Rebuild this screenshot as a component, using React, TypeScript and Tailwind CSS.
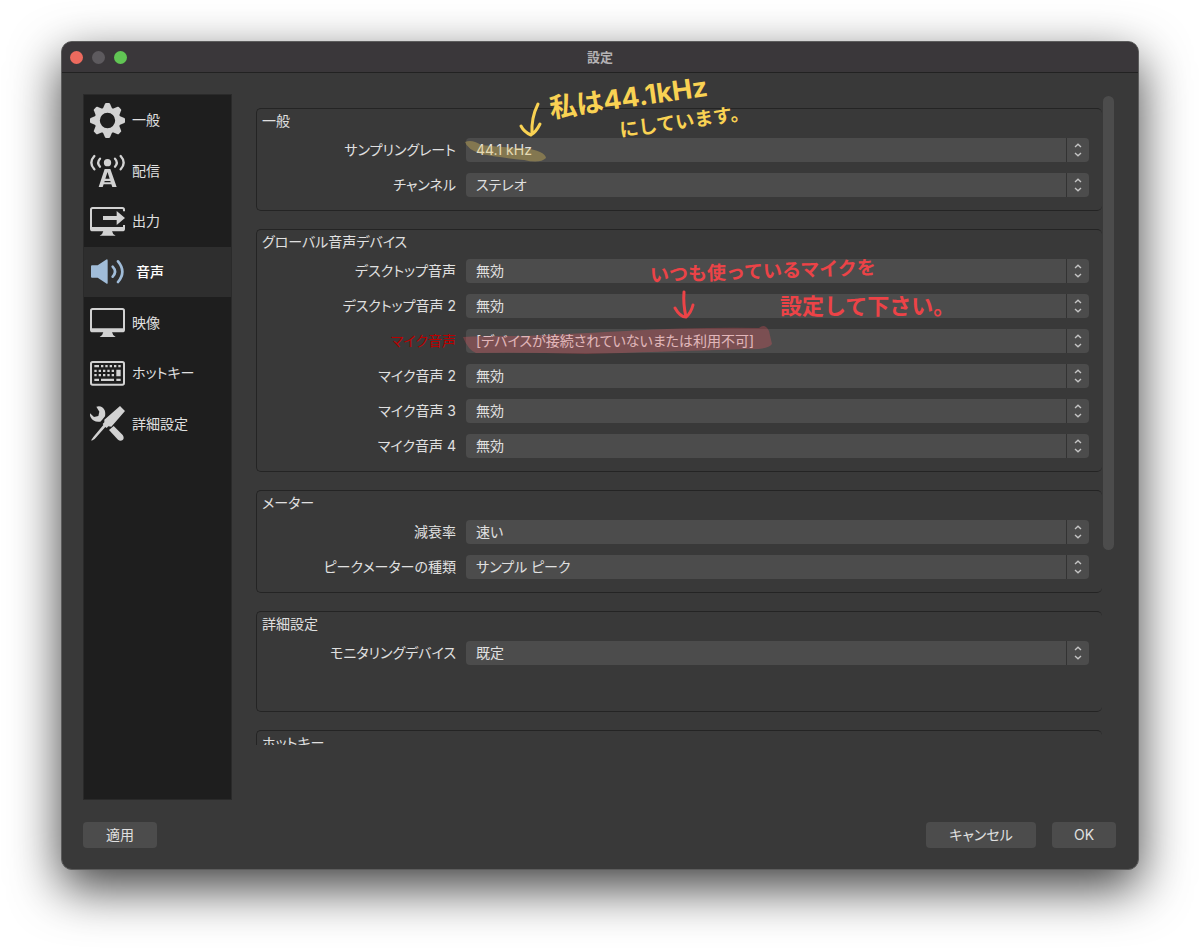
import { useState } from "react";
import type { ReactNode } from "react";

type Field = { id: string; label: string; value: string; missing?: boolean };
type Group = { title: string; fields: Field[]; tall?: boolean };

const groups: Group[] = [
  {
    title: "一般",
    fields: [
      { id: "sample-rate", label: "サンプリングレート", value: "44.1 kHz" },
      { id: "channels", label: "チャンネル", value: "ステレオ" },
    ],
  },
  {
    title: "グローバル音声デバイス",
    fields: [
      { id: "desktop-1", label: "デスクトップ音声", value: "無効" },
      { id: "desktop-2", label: "デスクトップ音声 2", value: "無効" },
      {
        id: "mic-1",
        label: "マイク音声",
        value: "[デバイスが接続されていないまたは利用不可]",
        missing: true,
      },
      { id: "mic-2", label: "マイク音声 2", value: "無効" },
      { id: "mic-3", label: "マイク音声 3", value: "無効" },
      { id: "mic-4", label: "マイク音声 4", value: "無効" },
    ],
  },
  {
    title: "メーター",
    fields: [
      { id: "decay", label: "減衰率", value: "速い" },
      { id: "peak", label: "ピークメーターの種類", value: "サンプル ピーク" },
    ],
  },
  {
    title: "詳細設定",
    fields: [{ id: "monitor", label: "モニタリングデバイス", value: "既定" }],
    tall: true,
  },
  { title: "ホットキー", fields: [], tall: true },
];

const Icon = ({ children }: { children: ReactNode }) => (
  <svg viewBox="0 0 105 105" className="size-[35px] shrink-0" fill="currentColor" aria-hidden="true">
    {children}
  </svg>
);

const teeth = [0, 45, 90, 135, 180, 225, 270, 315];

const GearIcon = () => (
  <Icon>
    <circle cx="52.5" cy="52.5" r="31" fill="none" stroke="currentColor" strokeWidth="16" />
    {teeth.map((angle) => (
      <path
        key={angle}
        d="M38 18 L45 2 Q46 0 48 0 H57 Q59 0 60 2 L67 18 Z"
        transform={`rotate(${angle} 52.5 52.5)`}
      />
    ))}
  </Icon>
);

const BroadcastIcon = () => (
  <Icon>
    <circle cx="52.5" cy="29" r="11" />
    <g fill="none" stroke="currentColor" strokeWidth="7" strokeLinecap="round">
      <path d="M30 17 Q19 29 30 41" />
      <path d="M75 17 Q86 29 75 41" />
      <path d="M13 9 Q-5 29 13 49" />
      <path d="M92 9 Q110 29 92 49" />
    </g>
    <path
      fillRule="evenodd"
      d="M44 48 H61 L80 102 H67 L64 94 H41 L38 102 H26 Z M52.5 57 L46 77 H59 Z M44 84 L43 88 H62 L61 84 Z"
    />
  </Icon>
);

const OutputIcon = () => (
  <Icon>
    <path
      d="M102 22 V17 Q102 12 97 12 H8 Q3 12 3 17 V74 Q3 79 8 79 H97 Q102 79 102 74 V63"
      fill="none"
      stroke="currentColor"
      strokeWidth="6"
    />
    <path d="M3 69 H102 V76 Q102 80 98 80 H7 Q3 80 3 76 Z" />
    <path d="M40 81 H66 Q67 90 77 95 H29 Q39 90 40 81 Z" />
    <path d="M39 36 H80 V21 L105 42 L80 63 V48 H39 Z" />
  </Icon>
);

const SpeakerIcon = () => (
  <Icon>
    <path d="M3 37 Q3 34 6 34 H23 L48 17 Q53 14 53 20 V86 Q53 92 48 88 L23 71 H6 Q3 71 3 68 Z" />
    <g fill="none" stroke="currentColor" strokeWidth="8" strokeLinecap="round">
      <path d="M68 38 Q82 53 68 68" />
      <path d="M84 22 Q110 53 84 84" />
    </g>
  </Icon>
);

const MonitorIcon = () => (
  <Icon>
    <rect x="3" y="12" width="99" height="67" rx="5" fill="none" stroke="currentColor" strokeWidth="6" />
    <path d="M3 70 H102 V80 H3 Z" />
    <path d="M40 81 H66 Q67 90 77 96 H29 Q39 90 40 81 Z" />
  </Icon>
);

const KeyboardIcon = () => (
  <Icon>
    <rect x="3" y="18" width="99" height="68" rx="5" fill="none" stroke="currentColor" strokeWidth="6" />
    <path
      d="M13 27h14v7h-14z M33 27h7v7h-7z M46 27h7v7h-7z M59 27h7v7h-7z M72 27h7v7h-7z M85 27h7v7h-7z
         M13 41h7v7h-7z M26 41h7v7h-7z M39 41h7v7h-7z M52 41h7v7h-7z M65 41h7v7h-7z
         M13 54h7v7h-7z M26 54h7v7h-7z M39 54h7v7h-7z M52 54h7v7h-7z M65 54h7v7h-7z
         M79 41h13v20h-13z M13 68h14v7h-14z M33 68h39v7h-39z M79 68h13v7h-13z"
    />
  </Icon>
);

const ToolsIcon = () => (
  <Icon>
    <path d="M90 0 L105 15 L64 62 L55 61 L50 66 L46 63 L14 99 L5 104 L4 102 L10 93 L40 57 L38 54 L43 49 L43 41 Z" />
    <path d="M19 2 Q36 -3 44 13 Q47 21 45 31 L36 42 L31 47 Q10 50 2 34 Q-1 28 0 22 L12 33 L25 30 L28 17 Z" />
    <path d="M57 72 L71 60 L98 87 Q104 96 98 102 Q91 107 84 101 Z" />
  </Icon>
);

const pages = [
  { name: "一般", icon: <GearIcon /> },
  { name: "配信", icon: <BroadcastIcon /> },
  { name: "出力", icon: <OutputIcon /> },
  { name: "音声", icon: <SpeakerIcon /> },
  { name: "映像", icon: <MonitorIcon /> },
  { name: "ホットキー", icon: <KeyboardIcon /> },
  { name: "詳細設定", icon: <ToolsIcon /> },
];

const SelectRow = ({ field }: { field: Field }) => (
  <div className="flex items-center gap-[10px]">
    <label
      htmlFor={field.id}
      className={`w-[199px] shrink-0 text-right ${field.missing ? "text-[#b80000]" : ""}`}
    >
      {field.label}
    </label>
    <div className="grid flex-1">
      <select
        id={field.id}
        className="col-start-1 row-start-1 h-6 w-full appearance-none rounded bg-[#4c4c4c] pr-8 pl-[10px] outline-none"
      >
        <option>{field.value}</option>
      </select>
      <span className="pointer-events-none col-start-1 row-start-1 flex w-[23px] items-center justify-center justify-self-end border-l border-[#333333]">
        <svg
          viewBox="0 0 8 14"
          className="h-[14px] w-2"
          fill="none"
          stroke="#c4c4c4"
          strokeWidth="1.4"
          aria-hidden="true"
        >
          <path d="M1 4 L4 1.3 L7 4 M1 10 L4 12.7 L7 10" />
        </svg>
      </span>
    </div>
  </div>
);

const GroupBox = ({ group }: { group: Group }) => (
  <section
    className={`rounded-[5px] border border-r-0 border-[#242424] pt-[2px] pr-[13px] ${
      group.tall ? "pb-[46px]" : "pb-[13px]"
    }`}
  >
    <h2 className="mb-[7px] pl-[5px] leading-5">{group.title}</h2>
    <div className="flex flex-col gap-[11px]">
      {group.fields.map((field) => (
        <SelectRow key={field.id} field={field} />
      ))}
    </div>
  </section>
);

/* Pen notes written over the form */
const Notes = () => (
  <div className="pointer-events-none absolute inset-0 font-bold [font-feature-settings:normal]">
    <svg className="absolute top-0 left-0 h-[260px] w-[540px]" viewBox="0 0 540 260" fill="none" aria-hidden="true">
      <path
        d="M209 48 Q216 45 225 51 Q252 54 268 54 Q289 57 290 64 Q284 70 268 66 Q240 63 225 60 Q211 55 209 48 Z"
        fill="#f2cf58"
        opacity="0.33"
      />
      <path
        d="M207 243 Q230 242 270 242 Q330 239 370 237 Q440 233 503 234 Q509 229 513 237 L516 250 Q512 256 490 255 Q400 258 330 260 Q260 258 220 259 Q212 256 207 243 Z"
        fill="#e85560"
        opacity="0.3"
      />
      <g stroke="#f9d253" strokeWidth="3" strokeLinecap="round" strokeLinejoin="round">
        <path d="M282 10 Q275 24 276 40 M265 32 Q268 38 275 41 Q280 38 284 30" />
      </g>
      <g stroke="#ec4347" strokeWidth="3" strokeLinecap="round" strokeLinejoin="round">
        <path d="M428 198 Q427 210 430 223 M419 214 Q424 223 430 223 Q435 219 437 211" />
      </g>
    </svg>
    <p className="absolute -top-[10px] left-[293px] -rotate-8 text-[27px] leading-7 whitespace-nowrap text-[#f9d253]">
      私は44.1kHz
    </p>
    <p className="absolute top-[18px] left-[363px] -rotate-8 text-[19px] leading-5 whitespace-nowrap text-[#f9d253]">
      にしています。
    </p>
    <p className="absolute top-[168px] left-[394px] -rotate-2 text-[19px] leading-5 whitespace-nowrap text-[#ec4347]">
      いつも使っているマイクを
    </p>
    <p className="absolute top-[200px] left-[524px] text-[22px] leading-6 whitespace-nowrap text-[#ec4347]">
      設定して下さい。
    </p>
  </div>
);

const App = () => {
  const [current, setCurrent] = useState("音声");

  return (
    <div className="h-screen bg-white px-[61px] pt-[41px] pb-[81px] font-['Inter','Noto_Sans_CJK_JP',sans-serif] text-sm text-[#e0e0e0] [font-feature-settings:'palt']">
      <div className="flex h-full flex-col rounded-[11px] border border-[#5c5c5c] bg-[#393939] shadow-[0_18px_50px_rgba(0,0,0,0.75)]">
        {/* Title bar */}
        <header className="grid h-[31px] shrink-0 grid-cols-3 items-center rounded-t-[10px] border-b border-[#222222] bg-[#3a373a] px-2">
          <div className="flex gap-[9px]">
            <button aria-label="閉じる" className="size-[13px] rounded-full bg-[#ed6a5e]" />
            <button aria-label="最小化" className="size-[13px] rounded-full bg-[#5d5a5e]" />
            <button aria-label="拡大" className="size-[13px] rounded-full bg-[#61c554]" />
          </div>
          <h1 className="text-center text-[13px] font-bold text-[#b4b2b4]">設定</h1>
        </header>

        <div className="flex min-h-0 flex-1 flex-col gap-[22px] p-[21px] pr-[22px]">
          <div className="flex min-h-0 flex-1 gap-6">
            {/* Pages */}
            <nav className="w-[149px] shrink-0 border border-[#2a2a2a] bg-[#1e1e1e]">
              <ul className="grid h-[354px] grid-rows-7">
                {pages.map((page) => (
                  <li key={page.name}>
                    <button
                      onClick={() => setCurrent(page.name)}
                      className={`flex h-full w-full items-center pl-[6px] text-left ${
                        page.name === current ? "gap-[11px] bg-[#2e2e2e] font-medium text-white" : "gap-[7px]"
                      }`}
                    >
                      <span className={page.name === current ? "text-[#a0bcd8]" : "text-[#d2d2d2]"}>
                        {page.icon}
                      </span>
                      {page.name}
                    </button>
                  </li>
                ))}
              </ul>
            </nav>

            {/* Audio settings */}
            <main className="relative mb-[55px] flex min-w-0 flex-1 gap-px">
              <div className="flex min-w-0 flex-1 flex-col gap-[18px] overflow-y-auto pt-[14px] [scrollbar-width:none]">
                {groups.map((group) => (
                  <GroupBox key={group.title} group={group} />
                ))}
              </div>
              <div className="mr-[2px] w-[11px] pt-[2px]">
                <div className="h-[70%] rounded-full bg-[#4c4c4c]" />
              </div>
              <Notes />
            </main>
          </div>

          <footer className="flex shrink-0 gap-4">
            <button className="mr-auto h-[26px] w-[74px] rounded bg-[#4c4c4c]">適用</button>
            <button className="h-[26px] w-[110px] rounded bg-[#4c4c4c]">キャンセル</button>
            <button className="h-[26px] w-16 rounded bg-[#4c4c4c]">OK</button>
          </footer>
        </div>
      </div>
    </div>
  );
};

export default App;
